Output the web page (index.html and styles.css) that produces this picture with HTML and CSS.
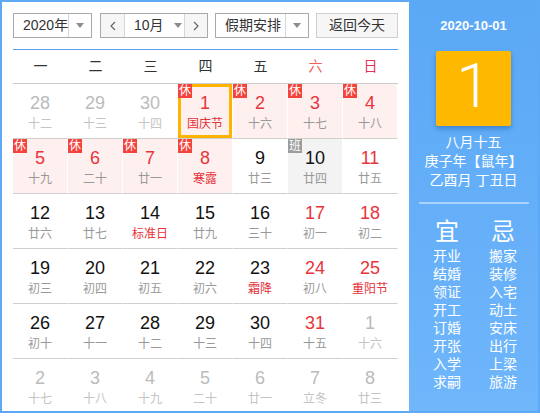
FILE: index.html
```html
<!DOCTYPE html>
<html lang="zh-CN">
<head>
<meta charset="utf-8">
<title>万年历</title>
<link rel="stylesheet" href="styles.css">
</head>
<body>
<div class="cal">
  <div class="main">
    <div class="toolbar">
      <div class="sel sel-year"><span class="sel-text">2020年</span><span class="sel-arrow"><i class="tri"></i></span></div>
      <div class="sel month-group">
        <span class="nav"><svg width="6" height="10" viewBox="0 0 6 10"><polyline points="5,1 1,5 5,9" fill="none" stroke="#666" stroke-width="1.2"/></svg></span>
        <span class="month-sel"><span class="sel-text">10月</span><i class="tri"></i></span>
        <span class="nav nav-next"><svg width="6" height="10" viewBox="0 0 6 10"><polyline points="1,1 5,5 1,9" fill="none" stroke="#666" stroke-width="1.2"/></svg></span>
      </div>
      <div class="sel sel-holiday"><span class="sel-text">假期安排</span><span class="sel-arrow"><i class="tri"></i></span></div>
      <div class="btn-today">返回今天</div>
    </div>
    <div class="week">
      <span>一</span><span>二</span><span>三</span><span>四</span><span>五</span><span class="sat">六</span><span class="sun">日</span>
    </div>
    <div class="grid">
      <div class="cell other"><b>28</b><em>十二</em></div>
      <div class="cell other"><b>29</b><em>十三</em></div>
      <div class="cell other"><b>30</b><em>十四</em></div>
      <div class="cell rest red fest cur"><span class="badge">休</span><b>1</b><em>国庆节</em></div>
      <div class="cell rest red"><span class="badge">休</span><b>2</b><em>十六</em></div>
      <div class="cell rest red"><span class="badge">休</span><b>3</b><em>十七</em></div>
      <div class="cell rest red"><span class="badge">休</span><b>4</b><em>十八</em></div>

      <div class="cell rest red"><span class="badge">休</span><b>5</b><em>十九</em></div>
      <div class="cell rest red"><span class="badge">休</span><b>6</b><em>二十</em></div>
      <div class="cell rest red"><span class="badge">休</span><b>7</b><em>廿一</em></div>
      <div class="cell rest red fest"><span class="badge">休</span><b>8</b><em>寒露</em></div>
      <div class="cell"><b>9</b><em>廿三</em></div>
      <div class="cell work"><span class="badge badge-work">班</span><b>10</b><em>廿四</em></div>
      <div class="cell red"><b>11</b><em>廿五</em></div>

      <div class="cell"><b>12</b><em>廿六</em></div>
      <div class="cell"><b>13</b><em>廿七</em></div>
      <div class="cell fest"><b>14</b><em>标准日</em></div>
      <div class="cell"><b>15</b><em>廿九</em></div>
      <div class="cell"><b>16</b><em>三十</em></div>
      <div class="cell red"><b>17</b><em>初一</em></div>
      <div class="cell red"><b>18</b><em>初二</em></div>

      <div class="cell"><b>19</b><em>初三</em></div>
      <div class="cell"><b>20</b><em>初四</em></div>
      <div class="cell"><b>21</b><em>初五</em></div>
      <div class="cell"><b>22</b><em>初六</em></div>
      <div class="cell fest"><b>23</b><em>霜降</em></div>
      <div class="cell red"><b>24</b><em>初八</em></div>
      <div class="cell red fest"><b>25</b><em>重阳节</em></div>

      <div class="cell"><b>26</b><em>初十</em></div>
      <div class="cell"><b>27</b><em>十一</em></div>
      <div class="cell"><b>28</b><em>十二</em></div>
      <div class="cell"><b>29</b><em>十三</em></div>
      <div class="cell"><b>30</b><em>十四</em></div>
      <div class="cell red"><b>31</b><em>十五</em></div>
      <div class="cell other"><b>1</b><em>十六</em></div>

      <div class="cell other last"><b>2</b><em>十七</em></div>
      <div class="cell other last"><b>3</b><em>十八</em></div>
      <div class="cell other last"><b>4</b><em>十九</em></div>
      <div class="cell other last"><b>5</b><em>二十</em></div>
      <div class="cell other last"><b>6</b><em>廿一</em></div>
      <div class="cell other last"><b>7</b><em>立冬</em></div>
      <div class="cell other last"><b>8</b><em>廿三</em></div>
    </div>
  </div>
  <div class="side">
    <div class="side-date">2020-10-01</div>
    <div class="side-day">1</div>
    <div class="side-lunar">
      <div>八月十五</div>
      <div>庚子年【鼠年】</div>
      <div>乙酉月 丁丑日</div>
    </div>
    <div class="side-sep"></div>
    <div class="yiji">
      <div class="yiji-col">
        <div class="yiji-title">宜</div>
        <div>开业</div><div>结婚</div><div>领证</div><div>开工</div><div>订婚</div><div>开张</div><div>入学</div><div>求嗣</div>
      </div>
      <div class="yiji-col">
        <div class="yiji-title">忌</div>
        <div>搬家</div><div>装修</div><div>入宅</div><div>动土</div><div>安床</div><div>出行</div><div>上梁</div><div>旅游</div>
      </div>
    </div>
  </div>
</div>
</body>
</html>
```

FILE: styles.css
```css
* { box-sizing: border-box; margin: 0; padding: 0; }
html, body { background: #fff; }
body {
  margin: 0;
  font-family: "Liberation Sans", Arial, "Noto Sans CJK SC", sans-serif;
  color: #333;
}
.cal {
  width: 540px;
  height: 413px;
  border: 2px solid #5ea9f6;
  display: flex;
  overflow: hidden;
}
.main {
  width: 407px;
  flex: none;
  padding: 11px 11px 0 11px;
  overflow: hidden;
}
.toolbar {
  display: flex;
  height: 25px;
  font-size: 14px;
}
.sel {
  display: flex;
  height: 25px;
  border: 1px solid #a9a9a9;
  background: #fff;
  line-height: 23px;
}
.sel-text { white-space: nowrap; flex: none; }
.sel-year { width: 79px; }
.sel-year .sel-text { width: 54px; padding-left: 9px; }
.sel-arrow {
  flex: 1;
  border-left: 1px solid #d6d6d6;
  display: flex;
  align-items: center;
  justify-content: center;
}
.tri {
  display: block;
  width: 0; height: 0;
  border-left: 4px solid transparent;
  border-right: 4px solid transparent;
  border-top: 5px solid #8c8c8c;
}
.month-group { width: 108px; margin-left: 8px; }
.nav {
  width: 23px;
  flex: none;
  background: #f6f6f6;
  display: flex;
  align-items: center;
  justify-content: center;
}
.nav-next { border-left: 1px solid #d6d6d6; width: 23px; }
.month-sel {
  flex: 1;
  border-left: 1px solid #d6d6d6;
  display: flex;
  align-items: center;
  padding-left: 9px;
}
.month-sel .tri { margin-left: 10px; }
.sel-holiday { width: 94px; margin-left: 7px; }
.sel-holiday .sel-text { width: 69px; padding-left: 9px; }
.btn-today {
  width: 82px;
  margin-left: 7px;
  height: 25px;
  border: 1px solid #cfcfcf;
  background: #f6f6f6;
  text-align: center;
  line-height: 23px;
}
.week {
  margin-top: 11px;
  width: 385px;
  height: 35px;
  border-top: 1px solid #5b9ff0;
  border-bottom: 1px solid #cccccc;
  display: grid;
  grid-template-columns: repeat(7, 55px);
  font-size: 14px;
  line-height: 33px;
  text-align: center;
}
.week .sat { color: #f0605c; }
.week .sun { color: #e63056; }
.grid {
  width: 385px;
  display: grid;
  grid-template-columns: repeat(7, 55px);
}
.cell {
  position: relative;
  height: 55px;
  border-bottom: 1px solid #cfcfcf;
  border-right: 1px solid #fff;
  text-align: center;
  padding-top: 8px;
}
.cell.last { border-bottom: none; }
.cell b {
  display: block;
  font-weight: normal;
  font-size: 18px;
  line-height: 22px;
  color: #111;
}
.cell em {
  display: block;
  font-style: normal;
  font-size: 12px;
  line-height: 16px;
  margin-top: 2px;
  color: #999;
}
.cell.red b { color: #e8343c; }
.cell.fest em { color: #e5323a; }
.cell.rest { background: #fff0f0; }
.cell.work { background: #f3f3f3; }
.cell.other b { color: #bbb; }
.cell.other em { color: #c4c4c4; }
.cell.cur { box-shadow: inset 0 0 0 3px #ffb400; }
.badge {
  position: absolute;
  left: 0; top: 0;
  width: 14px; height: 14px;
  background: #f4433c;
  color: #fff;
  font-size: 12px;
  line-height: 14px;
  text-align: center;
}
.badge-work { background: #9c9c9c; }
.side {
  flex: 1;
  background: linear-gradient(#5ba8f6, #6fb6fb);
  color: #fff;
  text-align: center;
  padding-top: 16px;
}
.side-date {
  font-size: 13px;
  font-weight: bold;
  line-height: 16px;
}
.side-day {
  width: 75px;
  height: 75px;
  margin: 17px auto 0;
  background: #ffb800;
  border-radius: 2px;
  box-shadow: 0 3px 5px rgba(0, 60, 140, 0.35);
  font-family: Roboto, "Liberation Sans", sans-serif;
  font-weight: 300;
  font-size: 62px;
  line-height: 70px;
}
.side-lunar {
  margin-top: 7px;
  font-size: 14px;
  line-height: 19px;
}
.side-sep {
  width: 110px;
  height: 2px;
  margin: 12px auto 0;
  background: rgba(255, 255, 255, 0.45);
}
.yiji {
  display: flex;
  padding-left: 18px;
  gap: 16px;
  margin-top: 13px;
}
.yiji-col {
  width: 40px;
  font-size: 14px;
  line-height: 18px;
}
.yiji-title {
  font-size: 24px;
  line-height: 30px;
}
```
